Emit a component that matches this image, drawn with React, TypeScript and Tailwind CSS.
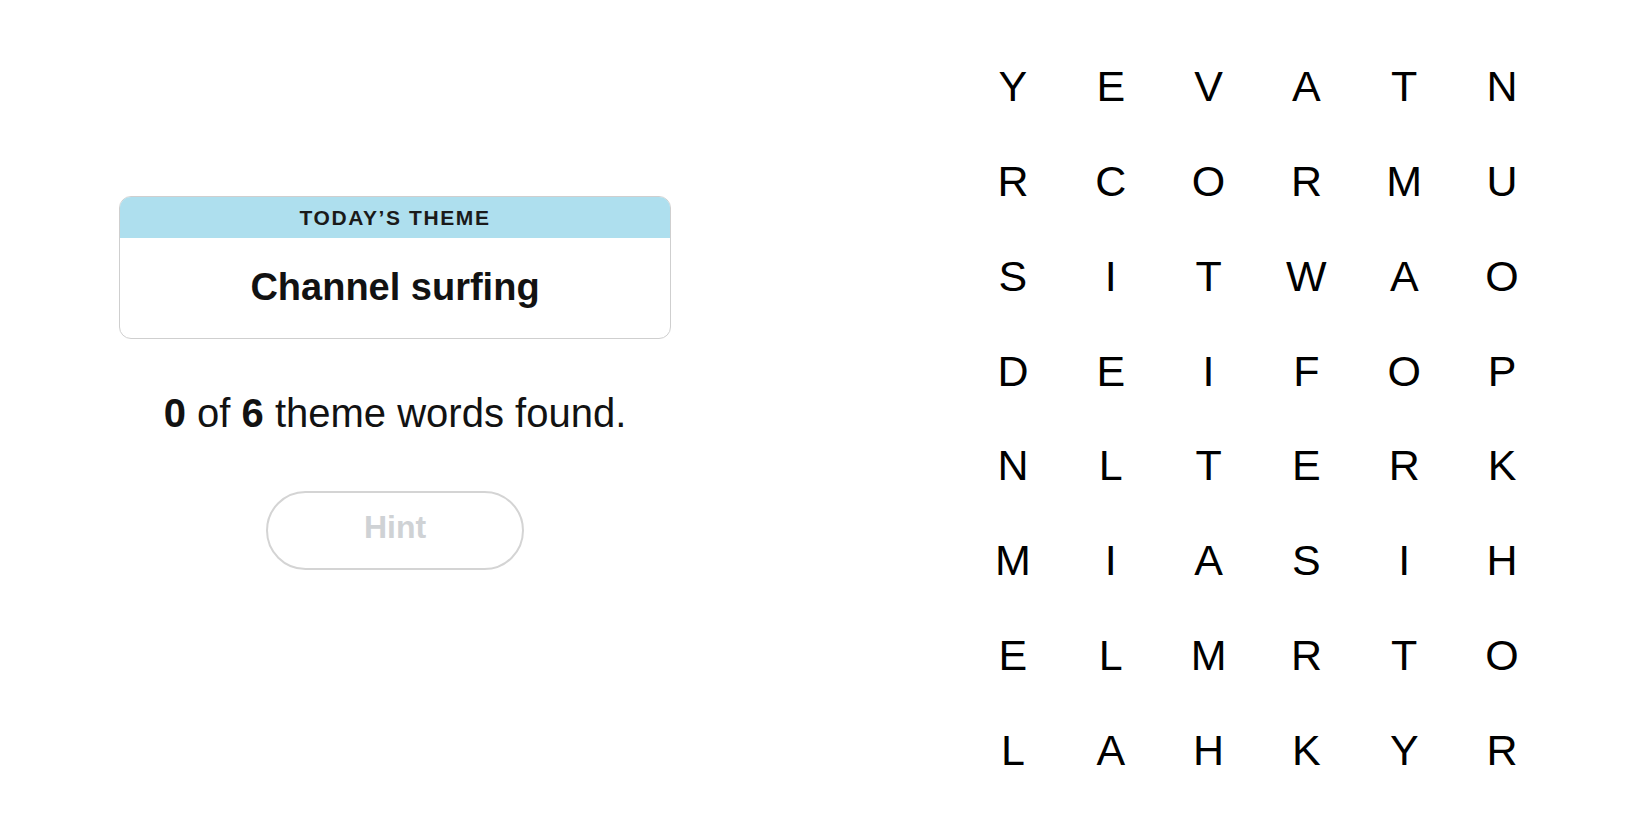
import React from "react";

const rows = [
  "YEVATN",
  "RCORMU",
  "SITWAO",
  "DEIFOP",
  "NLTERK",
  "MIASIH",
  "ELMRTO",
  "LAHKYR",
];

export default function App() {
  return (
    <div className="w-[1650px] h-[825px] bg-white flex font-['Liberation_Sans',Arial,sans-serif] text-[#121212]">
      <div className="w-[790px] flex flex-col items-center pt-[196px]">
        <div className="w-[552px] rounded-[12px] border border-[#cfcfcf] overflow-hidden">
          <div className="h-[41px] bg-[#aedfee] flex items-center justify-center text-[21px] font-semibold tracking-[1.6px] text-[#1a1a1a] pt-[1px]">
            TODAY’S THEME
          </div>
          <div className="h-[100px] flex items-center justify-center text-[38px] font-bold leading-none pb-[2px]">
            Channel surfing
          </div>
        </div>
        <div className="mt-[50px] text-[40px] leading-[48px]">
          <span className="font-bold">0</span> of <span className="font-bold">6</span> theme words found.
        </div>
        <button className="mt-[54px] w-[258px] h-[79px] rounded-full border-2 border-[#d4d4d4] bg-white flex items-center justify-center text-[32px] font-bold text-[#cfd2d5] pb-[7px]">
          Hint
        </button>
      </div>
      <div className="ml-[174px] pt-[39px]">
        <div className="grid grid-cols-6 w-[587px]">
          {rows.map((row, r) =>
            row.split("").map((ch, c) => (
              <div
                key={`${r}-${c}`}
                className="h-[94.86px] flex items-center justify-center text-[43px] leading-none text-black"
              >
                {ch}
              </div>
            ))
          )}
        </div>
      </div>
    </div>
  );
}
